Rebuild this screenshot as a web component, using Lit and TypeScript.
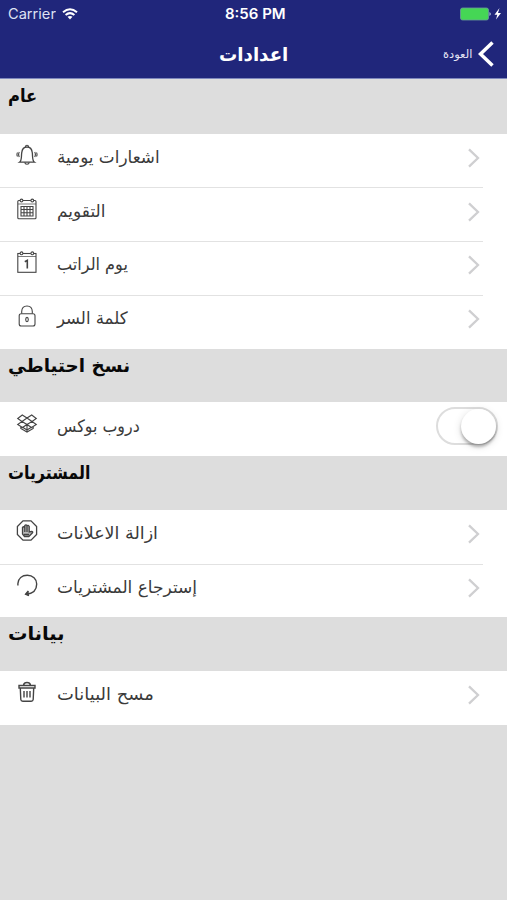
import { LitElement, html, css, svg } from "lit";
import { customElement, property } from "lit/decorators.js";

/** Text set on one line and condensed or widened to a given width. */
@customElement("fit-text")
class FitText extends LitElement {
  @property() text = "";
  @property({ type: Number }) width = 0;
  static styles = css`
    :host { display: block; flex: none; }
    .line { display: inline-block; white-space: nowrap; transform-origin: 0 50%; vertical-align: top; }
  `;
  updated() {
    const line = this.renderRoot.querySelector(".line") as HTMLElement;
    this.style.width = `${this.width}px`;
    line.style.transform = `scaleX(${this.width / line.offsetWidth})`;
  }
  render() {
    return html`<span class="line" dir="auto">${this.text}</span>`;
  }
}

const icons: Record<string, unknown> = {
  bell: svg`<path d="M3.500 18.200C6 16.500 5.200 12.500 5.700 8.800C6.100 5.300 8 3 11 3s4.900 2.300 5.300 5.800C16.800 12.500 16 16.500 18.500 18.200Z" stroke-width="1.300"/>
    <path d="M9.300 3Q9.500 1.200 11 1.200T12.700 3M8.700 18.400Q9 20.300 11 20.300T13.300 18.400M3.300 8Q1.900 10.500 3.300 13M1.500 8.500Q.400 10.500 1.500 12.500M18.700 8Q20.100 10.500 18.700 13M20.500 8.500Q21.600 10.500 20.500 12.500"/>`,
  calendar: svg`<rect x="1.800" y="2.500" width="18.200" height="18.300" rx="1"/><path d="M2 6h18" stroke-width=".7"/>
    <g fill="#fff"><circle cx="5.500" cy="2.500" r="1.400"/><circle cx="16.300" cy="2.500" r="1.400"/></g>
    <path d="M5 8.500h12v9.500H5ZM5 11.500h12M5 14.700h12M8 8.500v9.500M11 8.500v9.500M14 8.500v9.500"/>`,
  payday: svg`<rect x="1.800" y="2.500" width="18.200" height="18.800"/><path d="M2 5.500h18" stroke-width=".7"/>
    <g fill="#fff"><circle cx="5.500" cy="2.300" r="1.400"/><circle cx="16.300" cy="2.300" r="1.400"/></g>
    <path d="M8.800 10.800L11.300 9.300V17.500" stroke-width="1.600"/>`,
  lock: svg`<rect x="3.200" y="8.800" width="15.800" height="12.200" rx="2"/><path d="M5.700 8.500V6.500Q5.900 1 11 1T16.300 6.500V8.500"/><ellipse cx="11" cy="14.500" rx="1.300" ry="2.100"/>`,
  dropbox: svg`<path d="M6.300 2L11 5L15.700 2L20.300 5.500L16 8.500L20.300 11.500L15.500 14.500L11 11.500L6.500 14.500L1.700 11.500L6 8.500L1.700 5.500ZM11 5L6 8.500L11 11.500L16 8.500ZM4.800 13.800V15.500L11 19L17.200 15.500V13.800M11 11.500V18.500M11 17L7 14.500M11 17L15 14.500"/>`,
  stop: svg`<path d="M7 .900H15L20.600 6.500V14.500L15 20.200H7L1.400 14.500V6.500Z" stroke-width="1.300"/>
    <path d="M6.500 14V7.500Q7.700 6 8.800 7.500V5.500Q10 4.200 11 5.500V6Q12.200 4.700 13.200 6.500V12L15.500 11.500Q17.600 11.700 16.300 13L12.800 16.500H8.500ZM8.800 7v5M11 6v6M8 14.500h5" fill="#bbb" stroke-width="1.300"/>`,
  restore: svg`<path d="M1.900 11.500V9.500C2.300 4.500 6 1.300 11.300 1.300C16.700 1.300 20.700 5 20.700 10C20.700 15.500 17 19.500 10.500 20.300M12.300 17L9.600 20.300L13 21.700" stroke-width="1.400"/><path d="M12.500 16.700L9 20.500L13 21.800Z" fill="#444" stroke="none"/>`,
  trash: svg`<g stroke-width="1.400"><path d="M3 4.500H19V7H3ZM7.500 4.200Q8 1.500 11 1.500T14.500 4.200M4.300 7.200L4.800 18.500Q5 20.200 6.800 20.200H15.200Q17 20.200 17.200 18.500L17.700 7.200M8 10v6.500M11 10v6.500M14 10v6.500"/></g>`,
};

interface Row { icon: string; label: string; width: number; toggle?: boolean }
interface Section { title: string; width: number; rows: Row[] }

const sections: Section[] = [
  { title: "عام", width: 29, rows: [
    { icon: "bell", label: "اشعارات يومية", width: 103 },
    { icon: "calendar", label: "التقويم", width: 48 },
    { icon: "payday", label: "يوم الراتب", width: 71 },
    { icon: "lock", label: "كلمة السر", width: 71 },
  ] },
  { title: "نسخ احتياطي", width: 122, rows: [
    { icon: "dropbox", label: "دروب بوكس", width: 83, toggle: true },
  ] },
  { title: "المشتريات", width: 82, rows: [
    { icon: "stop", label: "ازالة الاعلانات", width: 101 },
    { icon: "restore", label: "إسترجاع المشتريات", width: 140 },
  ] },
  { title: "بيانات", width: 56, rows: [
    { icon: "trash", label: "مسح البيانات", width: 97 },
  ] },
];

@customElement("app-root")
class AppRoot extends LitElement {
  static styles = css`
    :host { display: block; height: 900px; overflow: hidden; background: #ddd; font-family: "DejaVu Sans", sans-serif; color: #3a3a3a; }
    svg { display: block; flex: none; }
    .top { height: 79px; box-sizing: border-box; background: #20267b; border-bottom: 1px solid #7f88bd; color: #fff; }
    .status { display: grid; grid-template-columns: 1fr auto 1fr; align-items: center; height: 27px; padding: 0 5px 0 8px; font-family: Inter, sans-serif; font-size: 14px; }
    .carrier { display: flex; align-items: center; gap: 6px; color: #dfe1f3; }
    .clock { font-weight: 600; font-size: 14px; }
    .battery { justify-self: end; }
    .nav { display: grid; grid-template-columns: 1fr auto 1fr; height: 54px; padding: 0 13px; align-items: center; }
    .title { grid-column: 2; font-size: 19px; font-weight: bold; line-height: 24px; }
    .back { display: flex; justify-content: flex-end; align-items: center; gap: 6px; font-size: 11.500px; color: #e4e5f4; }
    .heading { height: 53.800px; box-sizing: border-box; padding: 4px 8px; color: #080808; font-size: 18px; font-weight: bold; line-height: 26px; }
    .heading.first { height: 54.800px; }
    .row { height: 53.700px; box-sizing: border-box; background: #fff; display: flex; align-items: flex-start; padding: 10.300px 9px 0 16px; }
    .row + .row { background: linear-gradient(#e2e2e2, #e2e2e2) 0 0 / 483px 1px no-repeat #fff; }
    .label { margin: 1px 0 0 19px; font-size: 17px; line-height: 24px; }
    .chevron { margin: 4px 17px 0 auto; }
    .toggle { margin: -6px 0 0 auto; width: 62px; height: 38px; box-sizing: border-box; border: 2px solid #ddd; border-radius: 19px; display: flex; justify-content: flex-end; }
    .knob { width: 35px; height: 35px; border-radius: 50%; background: #fff; box-shadow: 0 3px 3px #0004, 0 2px 9px #0002; }
  `;
  row(r: Row) {
    return html`<div class="row">
      <svg width="22" height="23" viewBox="0 0 22 23" fill="none" stroke="#444" stroke-width="1.1">${icons[r.icon]}</svg>
      <fit-text class="label" .text=${r.label} .width=${r.width}></fit-text>
      ${r.toggle
        ? html`<div class="toggle"><div class="knob"></div></div>`
        : html`<svg class="chevron" width="14" height="20" viewBox="0 0 14 20" fill="none" stroke="#cfcfd1" stroke-width="2.300"><path d="M2 1.300L11 10L2 18.700"/></svg>`}
    </div>`;
  }
  render() {
    return html`
      <div class="top">
        <div class="status">
          <div class="carrier"><fit-text text="Carrier" width="48"></fit-text>
            <svg width="16" height="12" viewBox="0 0 16 12" fill="none" stroke="#fff" stroke-width="2"><path d="M1 4.200Q8-1.700 15 4.200M3.600 7Q8 3.300 12.400 7"/><path d="M5.500 8.800Q8 7 10.500 8.800L8 11.600Z" fill="#fff" stroke="none"/></svg>
          </div>
          <fit-text class="clock" text="8:56 PM" width="61"></fit-text>
          <svg class="battery" width="42" height="14" viewBox="0 0 42 14"><rect x=".5" y="1" width="28" height="12" rx="2" fill="#45d655" stroke="#6a9c9a" stroke-width=".8"/><path d="M29.500 5Q32 7 29.500 9Z" fill="#cde"/><path d="M39.500 1L34.500 7.700H37.300L36 12.500L41 6H38Z" fill="#fff"/></svg>
        </div>
        <div class="nav">
          <fit-text class="title" text="اعدادات" width="69"></fit-text>
          <div class="back"><fit-text text="العودة" width="29"></fit-text>
            <svg width="16" height="26" viewBox="0 0 16 26" fill="none" stroke="#fff" stroke-width="3.500"><path d="M14.500 1.500L2.500 13L14.500 24.500"/></svg>
          </div>
        </div>
      </div>
      ${sections.map((s, i) => html`
        <div class=${i === 0 ? "heading first" : "heading"}><fit-text .text=${s.title} .width=${s.width}></fit-text></div>
        ${s.rows.map((r) => this.row(r))}`)}
    `;
  }
}
